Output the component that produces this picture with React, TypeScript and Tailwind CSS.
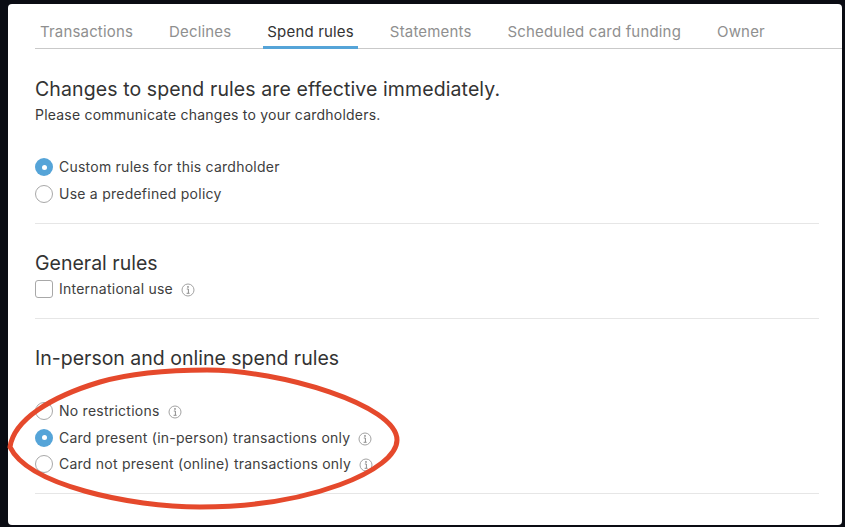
import React from 'react';

const tabs = ['Transactions', 'Declines', 'Spend rules', 'Statements', 'Scheduled card funding', 'Owner'];

const InfoIcon = () => (
  <svg width="14" height="14" viewBox="0 0 14 14" className="ml-2 shrink-0 mt-[2px]" fill="none">
    <circle cx="7" cy="7" r="6" stroke="#a3a3a3" strokeWidth="1" />
    <circle cx="7" cy="3.9" r="0.9" fill="#8c8c8c" />
    <path d="M5.8 6h1.6v4M5.6 10.3h3" stroke="#8c8c8c" strokeWidth="1" />
  </svg>
);

const Radio = ({ checked }: { checked?: boolean }) =>
  checked ? (
    <span className="w-[18px] h-[18px] rounded-full bg-[#55a4d8] flex items-center justify-center shrink-0">
      <span className="w-[5px] h-[5px] rounded-full bg-white" />
    </span>
  ) : (
    <span className="w-[18px] h-[18px] rounded-full border border-[#a8a8a8] bg-white shrink-0" />
  );

const Option = ({ label, checked, info }: { label: string; checked?: boolean; info?: boolean }) => (
  <div className="flex items-center h-[26.5px]">
    <Radio checked={checked} />
    <span className="ml-[6px] mb-[1px] text-[14px] text-[#404040] tracking-[0.24px]">{label}</span>
    {info && <InfoIcon />}
  </div>
);

export default function App() {
  return (
    <div className="relative h-screen bg-[#0a0c13] pt-[4px] pl-[8px] pr-[3px] pb-[2px] font-['Inter','Liberation_Sans',sans-serif] overflow-hidden">
      <div className="h-full bg-white rounded-[4px] pl-[27px]">
        {/* Tabs */}
        <div className="flex h-[45px] border-b border-[#c9c9c9] pl-[1px] gap-[28px]">
          {tabs.map((t) => (
            <div
              key={t}
              className={`h-[45px] px-[4px] flex items-center pt-[14px] text-[15px] tracking-[0.17px] border-b-[3px] ${
                t === 'Spend rules'
                  ? 'text-[#333] border-[#55a4d8]'
                  : 'text-[#8f8f8f] border-transparent'
              }`}
            >
              {t}
            </div>
          ))}
        </div>

        <div className="w-[784px]">
          <h1 className="mt-[27px] text-[19.5px] leading-[26px] tracking-[0.1px] text-[#333]">
            Changes to spend rules are effective immediately.
          </h1>
          <p className="mt-[4px] text-[14px] leading-[18px] tracking-[0.22px] text-[#3a3a3a]">
            Please communicate changes to your cardholders.
          </p>

          <div className="mt-[30px] pb-[16px] border-b border-[#e6e6e6]">
            <Option label="Custom rules for this cardholder" checked />
            <Option label="Use a predefined policy" />
          </div>

          <h2 className="mt-[26px] text-[19.5px] leading-[26px] text-[#333]">General rules</h2>
          <div className="pb-[16px] border-b border-[#e6e6e6]">
            <div className="flex items-center h-[26px]">
              <span className="w-[18px] h-[18px] rounded-[3px] border border-[#a8a8a8] bg-white shrink-0" />
              <span className="ml-[6px] mb-[1px] text-[14px] text-[#404040] tracking-[0.24px]">International use</span>
              <InfoIcon />
            </div>
          </div>

          <h2 className="mt-[26px] text-[19.5px] leading-[26px] text-[#333]">In-person and online spend rules</h2>
          <div className="mt-[27px] pb-[15px] border-b border-[#e6e6e6]">
            <Option label="No restrictions" info />
            <Option label="Card present (in-person) transactions only" checked info />
            <Option label="Card not present (online) transactions only" info />
          </div>
        </div>
      </div>

      {/* hand drawn annotation */}
      <svg className="absolute inset-0 pointer-events-none blur-[0.4px]" width="845" height="527" viewBox="0 0 845 527" fill="none">
        <path
          d="M10 447C14 420 50 397 100 382C135 372 170 370 207 370C280 370 397 405 397 440C397 470 310 507 200 507C130 507 28 485 10 447Z"
          stroke="#e5492c"
          strokeWidth="5"
        />
      </svg>
    </div>
  );
}
